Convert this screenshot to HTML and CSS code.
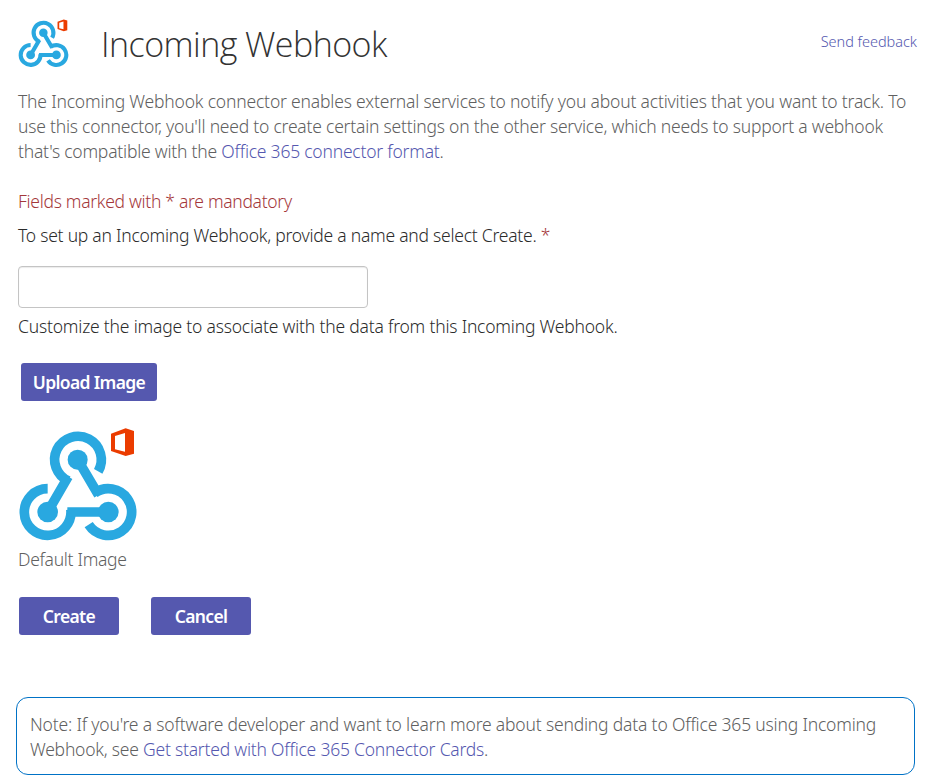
FILE: index.html
```
<!DOCTYPE html>
<html lang="en">
<head>
<meta charset="utf-8">
<title>Incoming Webhook</title>
<link rel="stylesheet" href="styles.css">
</head>
<body>
<svg class="symbols" aria-hidden="true">
  <symbol id="webhook" viewBox="24 24 360 342">
    <g fill="none" stroke="#29a8e0" stroke-width="29">
      <path d="M264.6 154A70 70 0 1 0 175.5 183"/>
      <path d="M113 206A70 70 0 1 0 182.6 268.7"/>
      <path d="M236 314A70 70 0 1 0 254 219.4"/>
      <path d="M113 276L174.5 170M203 119L265.5 225M295 276H172"/>
    </g>
    <g fill="#29a8e0"><circle cx="203" cy="119" r="30"/><circle cx="113" cy="276" r="31"/><circle cx="295" cy="276" r="31"/></g>
    <path fill="#eb3c00" fill-rule="evenodd" d="M303 41L347 25L372 33V101L347 108L303 93ZM315 48V88L345 95V39Z"/>
  </symbol>
</svg>
<header class="header">
  <svg class="logo"><use href="#webhook"/></svg>
  <h1 class="title">Incoming Webhook</h1>
  <a class="feedback">Send feedback</a>
</header>
<main class="content">
  <p class="intro"><span class="wide">The Incoming Webhook connector enables external services to notify you about activities that you want to track. To</span><br>use this connector, you'll need to create certain settings on the other service, which needs to support a webhook<br>that's compatible with the <a>Office 365 connector format</a>.</p>
  <p class="mandatory">Fields marked with * are mandatory</p>
  <label class="label" for="name">To set up an Incoming Webhook, provide a name and select Create. <b class="star">*</b></label>
  <input class="name" id="name" type="text">
  <p class="customize">Customize the image to associate with the data from this Incoming Webhook.</p>
  <button class="button upload">Upload Image</button>
  <figure class="figure">
    <svg class="picture"><use href="#webhook"/></svg>
    <figcaption>Default Image</figcaption>
  </figure>
  <div class="actions">
    <button class="button">Create</button>
    <button class="button">Cancel</button>
  </div>
  <p class="note"><span class="wide">Note: If you're a software developer and want to learn more about sending data to Office 365 using Incoming</span><br>Webhook, see <a>Get started with Office 365 Connector Cards</a>.</p>
</main>
</body>
</html>
```
FILE: styles.css
```
* { box-sizing: border-box; }
body {
  margin: 0;
  padding: 0 31px 0 18px;
  background: #fff;
  color: #606060;
  font: 350 17.5px/25px "Noto Sans", "Open Sans", sans-serif;
  letter-spacing: -0.22px;
  white-space: nowrap;
}
p, h1, figure { margin: 0; }
a { color: #5558af; }
.symbols { position: absolute; width: 0; height: 0; }
.wide { letter-spacing: -0.18px; }
.header { display: flex; align-items: flex-start; height: 89px; }
.logo { width: 51px; height: 49px; margin-top: 19px; }
.title { margin: 19px 0 0 32px; color: #333; font: 300 34px/50px "Open Sans", "Noto Sans", sans-serif; letter-spacing: -0.55px; }
.feedback { margin: 29px 0 0 auto; font-size: 14.5px; line-height: 24px; letter-spacing: -0.03px; }
.mandatory { margin-top: 25px; color: #a4373a; letter-spacing: -0.3px; }
.label { display: block; margin-top: 9px; color: #2b2b2b; letter-spacing: -0.24px; }
.star { color: #a4373a; font-weight: 350; }
.name {
  display: block; width: 350px; height: 42px; margin-top: 18px; padding: 0 12px;
  border: 1px solid #c4c4c4; border-radius: 4px; font: inherit;
  box-shadow: inset 0 1px 1px rgba(0,0,0,.08);
}
.customize { margin-top: 6px; color: #2b2b2b; letter-spacing: -0.2px; }
.button {
  width: 100px; height: 38px; padding: 0; border: 0; border-radius: 3px;
  background: #5558af; color: #fff; font: 600 17.5px/38px "Noto Sans", "Open Sans", sans-serif;
  letter-spacing: -0.65px;
}
.upload { display: block; width: 136px; margin: 24px 0 0 3px; }
.figure { margin-top: 27px; }
.picture { display: block; width: 120px; height: 114px; }
.figure figcaption { margin-top: 5px; letter-spacing: -0.3px; }
.actions { display: flex; gap: 32px; margin: 25px 0 0 1px; }
.note { margin: 62px -16px 0 -2px; width: 899px; height: 78px; padding: 14px 13px; border: 1px solid #0072c6; border-radius: 12px; }
```
